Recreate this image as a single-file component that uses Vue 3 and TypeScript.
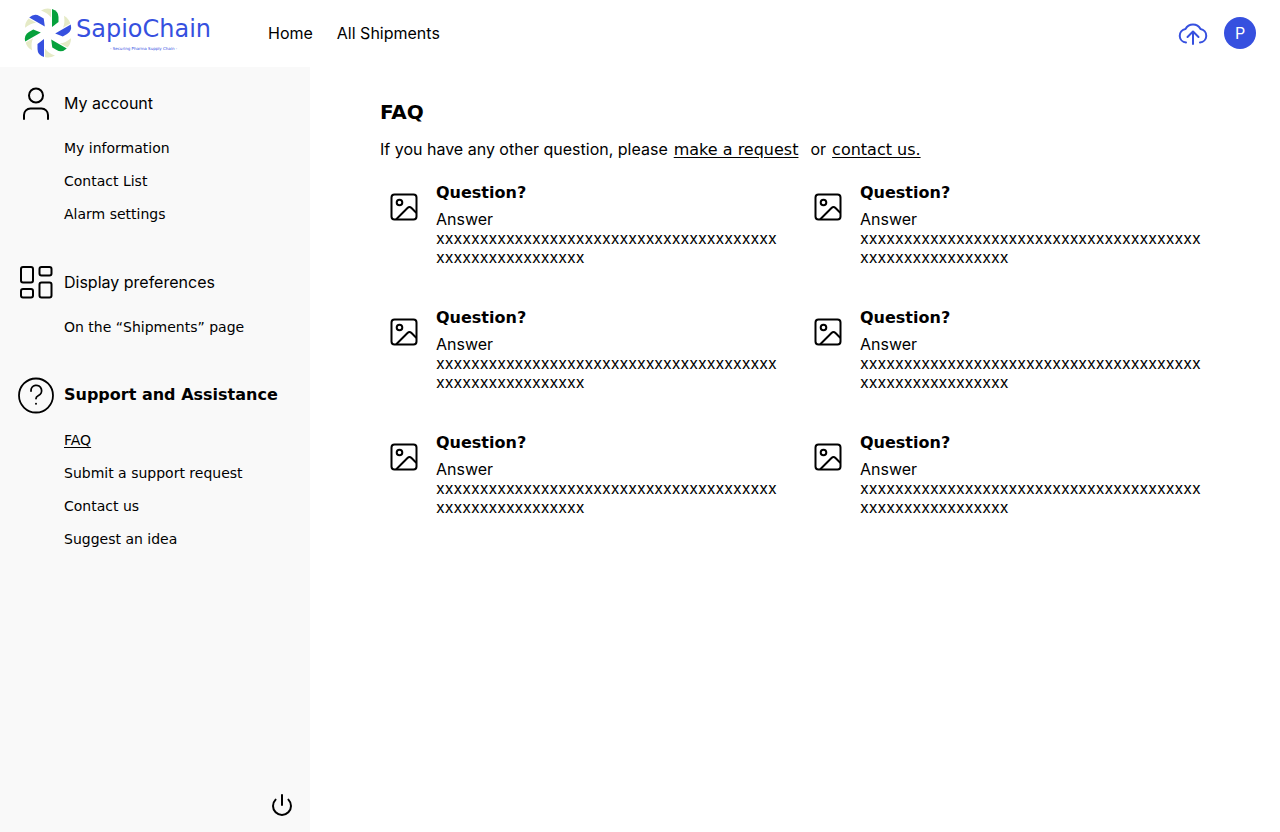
<script setup lang="ts">
interface NavLink {
  label: string
  active?: boolean
}
interface NavSection {
  id: 'account' | 'display' | 'support'
  title: string
  links: NavLink[]
}

const sections: NavSection[] = [
  {
    id: 'account',
    title: 'My account',
    links: [{ label: 'My information' }, { label: 'Contact List' }, { label: 'Alarm settings' }],
  },
  { id: 'display', title: 'Display preferences', links: [{ label: 'On the “Shipments” page' }] },
  {
    id: 'support',
    title: 'Support and Assistance',
    links: [
      { label: 'FAQ', active: true },
      { label: 'Submit a support request' },
      { label: 'Contact us' },
      { label: 'Suggest an idea' },
    ],
  },
]

const faqs = Array.from({ length: 6 }, (_, i) => ({
  id: i,
  question: 'Question?',
  answer: 'Answer',
  detail: 'x'.repeat(56),
}))

const blades = [0, 60, 120, 180, 240, 300].map((angle, i) => ({
  angle,
  color: i % 2 === 0 ? '#06a13c' : '#3650df',
}))
</script>

<template>
  <div class="app">
    <header class="topbar">
      <a class="brand" href="#">
        <svg class="brand-mark" viewBox="-25 -25 50 50" aria-hidden="true">
          <g v-for="b in blades" :key="b.angle" :transform="`rotate(${b.angle})`">
            <path d="M-7 -22.500Q-2 -25.500 3 -24L3 -15.500Q0 -20 -7 -22.500Z" fill="#e5eac6" />
            <path d="M4 -24Q10.500 -22 10.500 -16L10.500 -11L4 -6Z" :fill="b.color" />
          </g>
        </svg>
        <span class="brand-text">
          <span class="brand-name">SapioChain</span>
          <span class="brand-tag">- Securing Pharma Supply Chain -</span>
        </span>
      </a>
      <nav class="main-nav" aria-label="Main">
        <a href="#">Home</a>
        <a href="#">All Shipments</a>
      </nav>
      <div class="actions">
        <button class="icon-button" type="button" aria-label="Upload">
          <svg width="32" height="32" viewBox="0 0 32 32" fill="none" stroke="#3650df" stroke-width="2" stroke-linecap="round" stroke-linejoin="round">
            <path d="M9 25.500A6.800 6.800 0 0 1 8.500 12A8.500 8.500 0 0 1 23.500 12A6.800 6.800 0 0 1 23 25.500" />
            <path d="M16 27V15M10.500 20L16 14.500L21.500 20" />
          </svg>
        </button>
        <button class="avatar" type="button">P</button>
      </div>
    </header>

    <div class="body">
      <aside class="sidebar">
        <nav class="side-nav" aria-label="Settings">
          <section v-for="s in sections" :key="s.id" class="group">
            <h2 class="group-title" :class="{ current: s.id === 'support' }">
              <svg width="40" height="40" viewBox="0 0 40 40" fill="none" stroke="#000" stroke-width="2" stroke-linecap="round" stroke-linejoin="round" aria-hidden="true">
                <template v-if="s.id === 'account'">
                  <circle cx="20" cy="12.500" r="7" />
                  <path d="M8 36V32A6.500 6.500 0 0 1 14.500 25.500H25.500A6.500 6.500 0 0 1 32 32V36" />
                </template>
                <template v-else-if="s.id === 'display'">
                  <rect x="5" y="5" width="12" height="15.500" rx="2" />
                  <rect x="23.500" y="5" width="12" height="8.500" rx="2" />
                  <rect x="5" y="27" width="12" height="8.500" rx="2" />
                  <rect x="23.500" y="20.500" width="12" height="15" rx="2" />
                </template>
                <template v-else>
                  <circle cx="20" cy="20.500" r="17" stroke-width="1.800" />
                  <path d="M15 16A5.300 5.300 0 1 1 22.500 20.500Q20 21.700 20 23.500" stroke-width="1.800" />
                  <circle cx="20" cy="28.800" r="1" fill="#000" stroke="none" />
                </template>
              </svg>
              {{ s.title }}
            </h2>
            <ul>
              <li v-for="l in s.links" :key="l.label">
                <a href="#" :class="{ active: l.active }">{{ l.label }}</a>
              </li>
            </ul>
          </section>
        </nav>
        <button class="icon-button power" type="button" aria-label="Log out">
          <svg width="24" height="24" viewBox="0 0 24 24" fill="none" stroke="#000" stroke-width="2" stroke-linecap="round">
            <path d="M12 2V12M18.400 6.600A9 9 0 1 1 5.600 6.600" />
          </svg>
        </button>
      </aside>

      <main class="content">
        <h1>FAQ</h1>
        <p class="intro">
          <span>If you have any other question, please</span>
          <a href="#">make a request</a>
          <span class="or">or</span>
          <a href="#">contact us.</a>
        </p>
        <div class="faq-grid">
          <article v-for="f in faqs" :key="f.id" class="faq">
            <svg class="faq-icon" width="32" height="32" viewBox="0 0 32 32" fill="none" stroke="#000" stroke-width="2" stroke-linecap="round" stroke-linejoin="round" aria-hidden="true">
              <rect x="3.500" y="3.500" width="25" height="25" rx="3" />
              <circle cx="11.500" cy="11.500" r="2.800" />
              <path d="M8.500 28L19.500 17Q21.500 15 23.500 17L28 21.500" />
            </svg>
            <div class="faq-text">
              <h3>{{ f.question }}</h3>
              <p>{{ f.answer }}</p>
              <p class="detail">{{ f.detail }}</p>
            </div>
          </article>
        </div>
      </main>
    </div>
  </div>
</template>

<style>
body {
  margin: 0;
  background: #fff;
}
</style>

<style scoped>
.app {
  min-height: 100vh;
  display: flex;
  flex-direction: column;
  font: 16px/20px Inter, sans-serif;
  color: #000;
}
a {
  color: inherit;
  text-decoration: none;
}
h1, h2, h3, p, ul {
  margin: 0;
  padding: 0;
}
ul {
  list-style: none;
}
button {
  border: 0;
  padding: 0;
  cursor: pointer;
}
.topbar {
  display: flex;
  align-items: center;
  padding: 8px 24px 9px 23px;
}
.brand {
  display: flex;
  align-items: center;
  width: 245px;
  gap: 3px;
}
.brand-mark {
  width: 50px;
  height: 50px;
}
.brand-text {
  display: flex;
  flex-direction: column;
  align-items: center;
  color: #3650df;
  font-family: "DejaVu Sans", Verdana, sans-serif;
}
.brand-name {
  font-size: 24px;
  line-height: 32px;
}
.brand-tag {
  font-size: 4px;
  line-height: 8px;
}
.main-nav {
  display: flex;
  gap: 24px;
}
.actions {
  margin-left: auto;
  display: flex;
  gap: 15px;
}
.icon-button {
  background: none;
  display: flex;
}
.avatar {
  width: 32px;
  height: 32px;
  border-radius: 50%;
  background: #3650df;
  color: #fff;
  font: 16px/32px Inter, sans-serif;
}
.body {
  flex: 1;
  display: flex;
}
.sidebar {
  flex: 0 0 310px;
  background: #f9f9f9;
  display: flex;
  flex-direction: column;
  justify-content: space-between;
  box-sizing: border-box;
  padding: 16px 16px 15px;
}
.side-nav {
  display: flex;
  flex-direction: column;
  gap: 31px;
}
.group-title {
  display: flex;
  align-items: center;
  gap: 8px;
  font-size: 16px;
  font-weight: 400;
}
.group-title.current {
  font-family: "DejaVu Sans", Verdana, sans-serif;
  font-weight: 700;
}
.group ul {
  padding: 9px 0 0 48px;
}
.group li {
  font: 14px/33px "DejaVu Sans", Verdana, sans-serif;
}
.active,
.intro a {
  text-decoration: underline;
  text-underline-offset: 2px;
}
.power {
  align-self: flex-end;
}
.content {
  flex: 1;
  padding: 32px 76px 32px 70px;
}
h1 {
  font: 700 20px/26px "DejaVu Sans", Verdana, sans-serif;
}
.intro {
  display: flex;
  align-items: baseline;
  gap: 6px;
  margin-top: 14px;
}
.intro a {
  font-family: "DejaVu Sans", Verdana, sans-serif;
}
.or {
  margin-left: 6px;
}
.faq-grid {
  display: grid;
  grid-template-columns: 1fr 1fr;
  gap: 39px 24px;
  margin-top: 21px;
}
.faq {
  display: flex;
  gap: 16px;
  padding-left: 8px;
}
.faq-icon {
  flex: none;
  margin-top: 10px;
}
.faq-text {
  flex: 1;
  min-width: 0;
}
h3 {
  margin-bottom: 4px;
  font: 700 16px/24px "DejaVu Sans", Verdana, sans-serif;
}
.detail {
  line-height: 19px;
  overflow-wrap: anywhere;
}
</style>
